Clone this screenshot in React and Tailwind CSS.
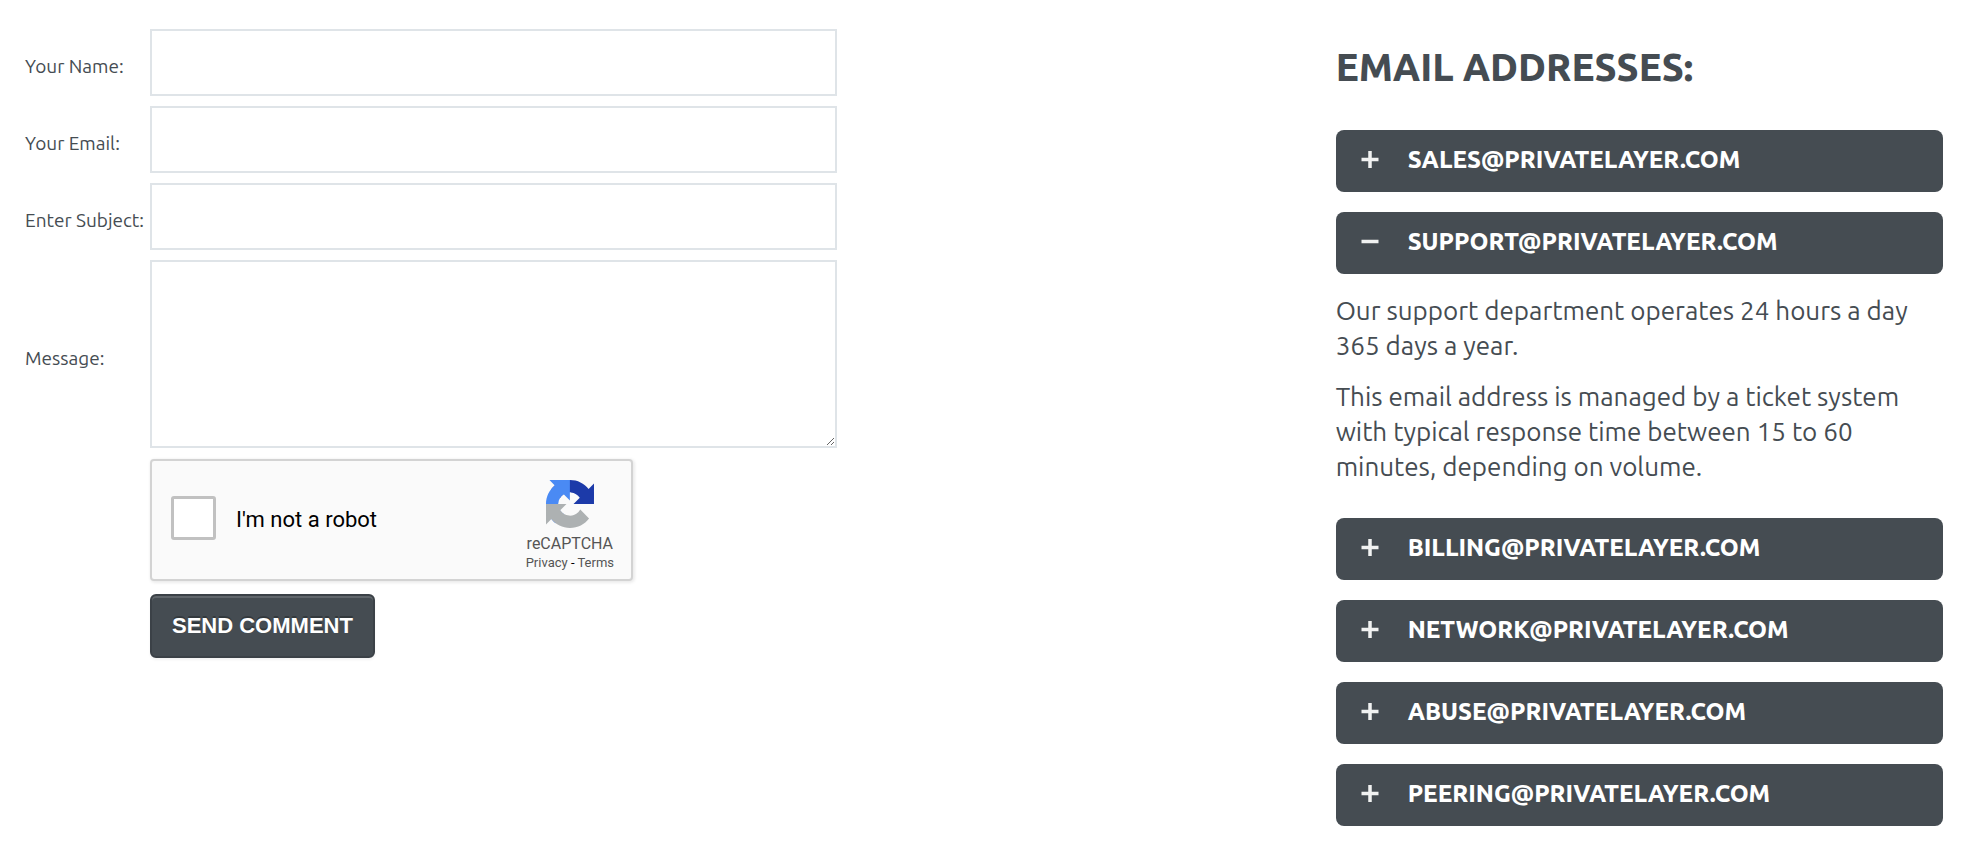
import React, { useState } from 'react';

const addresses = [
  { id: 'sales', email: 'SALES@PRIVATELAYER.COM', text: [] },
  {
    id: 'support',
    email: 'SUPPORT@PRIVATELAYER.COM',
    text: [
      'Our support department operates 24 hours a day 365 days a year.',
      'This email address is managed by a ticket system with typical response time between 15 to 60 minutes, depending on volume.',
    ],
  },
  { id: 'billing', email: 'BILLING@PRIVATELAYER.COM', text: [] },
  { id: 'network', email: 'NETWORK@PRIVATELAYER.COM', text: [] },
  { id: 'abuse', email: 'ABUSE@PRIVATELAYER.COM', text: [] },
  { id: 'peering', email: 'PEERING@PRIVATELAYER.COM', text: [] },
];

const fields = [
  { id: 'name', label: 'Your Name:', type: 'text' },
  { id: 'email', label: 'Your Email:', type: 'email' },
  { id: 'subject', label: 'Enter Subject:', type: 'text' },
];

function RecaptchaLogo() {
  return (
    <svg viewBox="0 0 64 64" className="size-12" aria-hidden="true">
      <path
        fill="#1c3aa9"
        d="M64 31.955l-.033-1.37V4.687l-7.16 7.16C50.948 4.674 42.033.093 32.05.093c-10.4 0-19.622 4.96-25.458 12.64l11.736 11.86a15.55 15.55 0 0 1 4.754-5.334c2.05-1.6 4.952-2.906 8.968-2.906.485 0 .86.057 1.135.163 4.976.393 9.288 3.14 11.828 7.124l-8.307 8.307L64 31.953"
      />
      <path
        fill="#4a8af4"
        d="M31.862.094l-1.37.033H4.594l7.16 7.16C4.58 13.147 0 22.06 0 32.046c0 10.4 4.96 19.622 12.64 25.458L24.5 45.768a15.55 15.55 0 0 1-5.334-4.754c-1.6-2.05-2.906-4.952-2.906-8.968 0-.485.057-.86.163-1.135.393-4.976 3.14-9.288 7.124-11.828l8.307 8.307L31.86.095"
      />
      <path
        fill="#adb1b2"
        d="M.001 32.045l.033 1.37v25.898l7.16-7.16c5.86 7.173 14.774 11.754 24.76 11.754 10.4 0 19.622-4.96 25.458-12.64l-11.736-11.86a15.55 15.55 0 0 1-4.754 5.334c-2.05 1.6-4.952 2.906-8.968 2.906-.485 0-.86-.057-1.135-.163-4.976-.393-9.288-3.14-11.828-7.124l8.307-8.307c-10.522.04-22.4.066-27.295-.005"
      />
    </svg>
  );
}

function Recaptcha() {
  return (
    <div className="mt-px flex h-[122px] w-[483px] max-w-full items-center justify-between rounded-[4px] border-2 border-[#d3d3d3] bg-[#fafafa] pr-[17px] pl-[19px] font-[Roboto,sans-serif] shadow-[1px_1px_3px_1px_rgba(0,0,0,0.08)]">
      <label className="flex items-center gap-5 pb-0.5 text-[22px] text-black">
        <input
          type="checkbox"
          className="mb-0.5 h-11 w-[45px] appearance-none rounded-[3px] border-3 border-[#c1c1c1] bg-white checked:bg-[#4a8af4]"
        />
        I'm not a robot
      </label>
      <div className="flex flex-col items-center pt-3 text-[#555]">
        <RecaptchaLogo />
        <div className="mt-1.5 text-base leading-5">reCAPTCHA</div>
        <div className="text-[13px] leading-[18px]">
          <a href="#privacy">Privacy</a>
          <span className="text-black"> - </span>
          <a href="#terms">Terms</a>
        </div>
      </div>
    </div>
  );
}

function ContactForm() {
  return (
    <form
      className="grid grid-cols-[125px_1fr] items-center gap-y-0.5 text-[19px]"
      onSubmit={(e) => e.preventDefault()}
    >
      {fields.map((field) => (
        <React.Fragment key={field.id}>
          <label htmlFor={field.id} className="font-[450] whitespace-nowrap">
            {field.label}
          </label>
          <input
            id={field.id}
            type={field.type}
            className="mb-2 h-[67px] w-full max-w-[687px] border-2 border-[#dfe4e8] bg-white px-4"
          />
        </React.Fragment>
      ))}

      <label htmlFor="message" className="font-[450]">
        Message:
      </label>
      <textarea
        id="message"
        className="mb-2 block h-[188px] w-full max-w-[687px] resize border-2 border-[#dfe4e8] bg-white p-4"
      />

      <div className="col-start-2">
        <Recaptcha />
        <button
          type="submit"
          className="mt-[13px] h-16 rounded-md border-2 border-[#3b4147] bg-[#454c52] px-5 pb-0.5 font-['Liberation_Sans',Arial,sans-serif] text-[22px] font-bold text-white shadow-[inset_0_2px_0_rgba(255,255,255,0.15),0_2px_3px_rgba(0,0,0,0.05)] [text-shadow:0_-2px_0_rgba(0,0,0,0.25)]"
        >
          SEND COMMENT
        </button>
      </div>
    </form>
  );
}

function ToggleIcon({ open }) {
  return (
    <svg viewBox="0 0 18 18" className="size-[18px]" stroke="#f1f2f2" strokeWidth="3.5" aria-hidden="true">
      <path d={open ? 'M.5 8.5h17' : 'M.5 8.5h17M9 0v17'} />
    </svg>
  );
}

function EmailAddresses() {
  const [openId, setOpenId] = useState('support');

  return (
    <section>
      <h2 className="text-[38px] leading-[50px] font-extrabold">EMAIL ADDRESSES:</h2>

      <div className="mt-[38px] flex flex-col gap-5">
        {addresses.map((item) => {
          const isOpen = item.id === openId;
          return (
            <div key={item.id}>
              <button
                type="button"
                aria-expanded={isOpen}
                onClick={() => setOpenId(isOpen ? null : item.id)}
                className="flex h-[62px] w-full items-center gap-[29px] rounded-lg bg-[#454c52] px-[25px] pb-0.5 text-left text-2xl font-extrabold text-white"
              >
                <ToggleIcon open={isOpen} />
                {item.email}
              </button>
              {isOpen && item.text.length > 0 && (
                <div className="flex flex-col gap-4 pt-[19px] pb-3.5 text-[26px] leading-[35px] font-[450]">
                  {item.text.map((line) => (
                    <p key={line}>{line}</p>
                  ))}
                </div>
              )}
            </div>
          );
        })}
      </div>
    </section>
  );
}

export default function App() {
  return (
    <main className="grid grid-cols-[2fr_1fr] gap-24 bg-white pr-6 pl-[25px] font-[Ubuntu,'Noto_Sans',sans-serif] text-[#454c52]">
      <div className="pt-[29px]">
        <ContactForm />
      </div>
      <div className="pt-[42px]">
        <EmailAddresses />
      </div>
    </main>
  );
}
